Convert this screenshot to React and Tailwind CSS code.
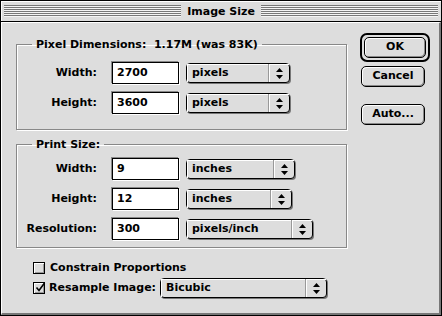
import React from "react";

const Arrows = () => (
    <svg width="7" height="11" viewBox="0 0 7 11">
        <polygon points="3.5,0 7,4 0,4" fill="#000" />
        <polygon points="0,7 7,7 3.5,11" fill="#000" />
    </svg>
);

const Popup = ({ label, width }) => (
    <div
        className="h-[20px] flex items-stretch rounded-[4px] border border-black bg-[#dddddd] shadow-[1px_1px_0_#777]"
        style={{ width }}
    >
        <div className="flex-1 flex items-center pl-[5px] border-r border-[#999] shadow-[inset_1px_1px_0_#fff]">
            {label}
        </div>
        <div className="w-[20px] flex items-center justify-center shadow-[inset_1px_1px_0_#fff]">
            <Arrows />
        </div>
    </div>
);

const Field = ({ value }) => (
    <div className="w-[67px] h-[22px] border border-black bg-white flex items-center pl-[4px] shadow-[-1px_-1px_0_#888,1px_1px_0_#fff]">
        {value}
    </div>
);

const Row = ({ label, value, unit, unitWidth }) => (
    <div className="flex items-center h-[22px]">
        <div className="w-[80px] text-right">{label}</div>
        <div className="ml-[15px]"><Field value={value} /></div>
        <div className="ml-[7px]"><Popup label={unit} width={unitWidth} /></div>
    </div>
);

const Group = ({ title, children, className }) => (
    <fieldset className={`border border-[#888] shadow-[1px_1px_0_#fff,inset_1px_1px_0_#fff] ${className}`}>
        <legend className="ml-[15px] px-[4px] leading-[15px] whitespace-pre">{title}</legend>
        {children}
    </fieldset>
);

const Button = ({ children, className }) => (
    <div className={`h-[21px] rounded-[5px] border border-black bg-[#dddddd] flex items-center justify-center shadow-[inset_1px_1px_0_#fff,inset_-1px_-1px_0_#888] ${className}`}>
        {children}
    </div>
);

const Checkbox = ({ checked }) => (
    <div className="w-[12px] h-[12px] shrink-0 border border-black bg-[#dddddd] shadow-[inset_1px_1px_0_#fff,inset_-1px_-1px_0_#999] relative">
        {checked && (
            <svg className="absolute left-[1px] top-[-1px]" width="11" height="11" viewBox="0 0 11 11">
                <path d="M1.5 5.5 L4 8.5 L9.5 1" stroke="#000" strokeWidth="1.6" fill="none" />
            </svg>
        )}
    </div>
);

export default function App() {
    return (
        <div className="w-[442px] h-[316px] border border-black bg-[#dddddd] flex flex-col text-black font-bold text-[11px] font-['DejaVu_Sans',Verdana,sans-serif]">
            {/* title bar */}
            <div className="h-[21px] shrink-0 border-b border-black flex items-center px-[3px] gap-[6px] shadow-[inset_1px_1px_0_#fff]">
                <div className="flex-1 h-[12px] bg-[repeating-linear-gradient(to_bottom,#777_0px,#777_1px,#f4f4f4_1px,#f4f4f4_2px)]" />
                <div className="leading-none">Image Size</div>
                <div className="flex-1 h-[12px] bg-[repeating-linear-gradient(to_bottom,#777_0px,#777_1px,#f4f4f4_1px,#f4f4f4_2px)]" />
            </div>

            {/* body */}
            <div className="flex-1 flex border-l border-t border-white border-r-2 border-b-2 border-r-[#777] border-b-[#777]">
                <div className="w-[345px] pl-[14px] pt-[14px] flex flex-col">
                    <Group title="Pixel Dimensions:  1.17M (was 83K)" className="w-[331px] pb-[15px]">
                        <div className="flex flex-col gap-[8px] pt-[10px]">
                            <Row label="Width:" value="2700" unit="pixels" unitWidth={104} />
                            <Row label="Height:" value="3600" unit="pixels" unitWidth={104} />
                        </div>
                    </Group>
                    <Group title="Print Size:" className="w-[331px] mt-[7px] pb-[7px]">
                        <div className="flex flex-col gap-[8px] pt-[6px]">
                            <Row label="Width:" value="9" unit="inches" unitWidth={109} />
                            <Row label="Height:" value="12" unit="inches" unitWidth={106} />
                            <Row label="Resolution:" value="300" unit="pixels/inch" unitWidth={127} />
                        </div>
                    </Group>
                    <div className="pl-[17px] mt-[13px] flex flex-col gap-[3px]">
                        <div className="flex items-center gap-[5px] h-[14px]">
                            <Checkbox />
                            <span>Constrain Proportions</span>
                        </div>
                        <div className="flex items-center gap-[4px]">
                            <Checkbox checked />
                            <span>Resample Image:</span>
                            <Popup label="Bicubic" width={167} />
                        </div>
                    </div>
                </div>
                <div className="flex-1 flex flex-col items-start pl-[13px] pt-[10px]">
                    <div className="p-[2px] rounded-[7px] border-2 border-black bg-[#dddddd]">
                        <Button className="w-[62px]">OK</Button>
                    </div>
                    <Button className="w-[64px] mt-[4px] ml-[1px]">Cancel</Button>
                    <Button className="w-[64px] mt-[17px] ml-[1px]">Auto...</Button>
                </div>
            </div>
        </div>
    );
}
